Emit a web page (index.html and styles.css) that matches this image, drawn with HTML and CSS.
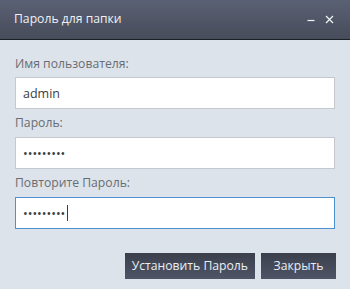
FILE: index.html
```html
<!DOCTYPE html>
<html lang="ru">
<head>
<meta charset="utf-8">
<title>Пароль для папки</title>
<link rel="stylesheet" href="styles.css">
</head>
<body>
<div class="dialog">
  <header class="titlebar">
    <span class="title">Пароль для папки</span>
    <div class="controls">
      <button class="ctl" aria-label="Свернуть">
        <svg width="8" height="8" viewBox="0 0 8 8"><path d="M0.5 5.5H7.5" stroke="#f2f4f8" stroke-width="1.2"/></svg>
      </button>
      <button class="ctl" aria-label="Закрыть">
        <svg width="9" height="9" viewBox="0 0 9 9"><path d="M1 1L8 8M8 1L1 8" stroke="#f2f4f8" stroke-width="1.2"/></svg>
      </button>
    </div>
  </header>
  <form class="content">
    <label class="label first" for="user">Имя пользователя:</label>
    <input class="field" id="user" type="text" value="admin">
    <label class="label" for="pw">Пароль:</label>
    <input class="field" id="pw" type="password" value="123456789">
    <label class="label" for="pw2">Повторите Пароль:</label>
    <div class="field-wrap">
      <input class="field focused" id="pw2" type="password" value="123456789">
      <span class="caret"></span>
    </div>
    <div class="actions">
      <button type="button" class="btn">Установить Пароль</button>
      <button type="button" class="btn">Закрыть</button>
    </div>
  </form>
</div>
</body>
</html>
```
FILE: styles.css
```css
* { box-sizing: border-box; }
html, body {
  margin: 0;
  padding: 0;
  background: #dde3ea;
  font-family: "Open Sans", "DejaVu Sans", sans-serif;
  font-size: 12px;
}
.dialog {
  width: 350px;
  height: 289px;
  background: #dde3ea;
}
.titlebar {
  height: 40px;
  display: flex;
  align-items: center;
  justify-content: space-between;
  padding: 0 14px 1px 14px;
  background: linear-gradient(#5a6174, #474c5a);
  border-bottom: 1px solid #1c1f25;
}
.title {
  color: #eef1f5;
  font-size: 12.2px;
  line-height: 18px;
}
.controls {
  display: flex;
  align-items: center;
  gap: 10px;
  margin-right: 2px;
}
.ctl {
  border: 0;
  background: none;
  padding: 0;
  width: 9px;
  height: 9px;
  display: flex;
  align-items: center;
  justify-content: center;
}
.content {
  padding: 15px 15px 0 15px;
  display: flex;
  flex-direction: column;
}
.label {
  display: block;
  color: #696d73;
  font-size: 12.2px;
  line-height: 18px;
  margin: 5px 0 5px 0;
}
.label.first { margin: 0 0 4px 0; }
.field {
  display: block;
  width: 320px;
  height: 32px;
  border: 1px solid #c5c8cc;
  background: #fff;
  padding: 0 7px;
  font-family: "Open Sans", "DejaVu Sans", sans-serif;
  font-size: 12.5px;
  color: #3a3d42;
  outline: none;
  margin: 0;
}
.field.focused { border-color: #4a92d2; }
.field-wrap { position: relative; }
.caret {
  position: absolute;
  left: 52px;
  top: 8px;
  width: 1px;
  height: 16px;
  background: #3a3d42;
}
.actions {
  display: flex;
  justify-content: flex-end;
  gap: 6px;
  margin-top: 24px;
  margin-right: -1px;
}
.btn {
  height: 26px;
  min-width: 75px;
  padding: 0 7px;
  border: 0;
  background: linear-gradient(#3b3f4c, #4f5567);
  color: #e9eef5;
  font-family: "Open Sans", "DejaVu Sans", sans-serif;
  font-size: 12.2px;
  line-height: 26px;
  text-align: center;
}
```
